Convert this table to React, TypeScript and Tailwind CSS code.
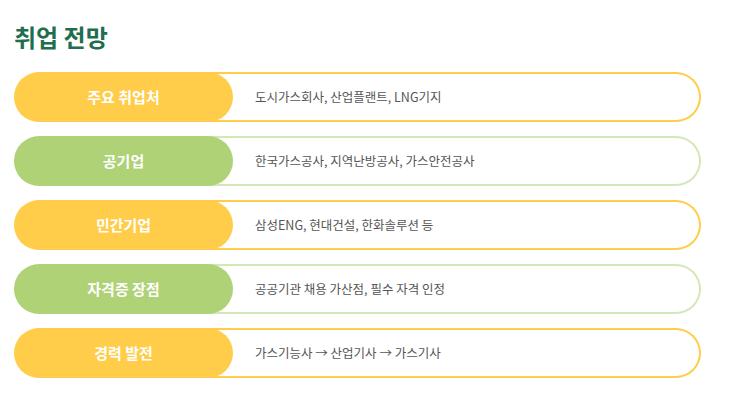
import React from "react";

const rows = [
  { label: "주요 취업처", text: "도시가스회사, 산업플랜트, LNG기지", c: "y" },
  { label: "공기업", text: "한국가스공사, 지역난방공사, 가스안전공사", c: "g" },
  { label: "민간기업", text: "삼성ENG, 현대건설, 한화솔루션 등", c: "y" },
  { label: "자격증 장점", text: "공공기관 채용 가산점, 필수 자격 인정", c: "g" },
  { label: "경력 발전", text: "가스기능사 → 산업기사 → 가스기사", c: "y" },
];

export default function App() {
  return (
    <div
      className="w-[733px] h-[401px] bg-white px-[14px] pt-[22px]"
      style={{ fontFamily: '"Noto Sans CJK KR", "Noto Sans", sans-serif' }}
    >
      <h1 className="text-[24px] leading-[30px] font-bold text-[#1f6e4f] mb-[20px]">취업 전망</h1>
      <div className="flex flex-col gap-[14px] w-[687px]">
        {rows.map((r, i) => (
          <div key={i} className="flex h-[50px]">
            <div
              className={
                r.c === "y"
                  ? "relative z-10 w-[219px] shrink-0 rounded-full bg-[#ffcd4a] flex items-center justify-center text-white font-bold text-[15px]"
                  : "relative z-10 w-[219px] shrink-0 rounded-full bg-[#aed275] flex items-center justify-center text-white font-bold text-[15px]"
              }
            >
              {r.label}
            </div>
            <div
              className={
                r.c === "y"
                  ? "flex-1 -ml-[40px] pl-[62px] flex items-center border-2 border-l-0 border-[#ffcd4a] rounded-r-full text-[12.5px] text-[#555555]"
                  : "flex-1 -ml-[40px] pl-[62px] flex items-center border-2 border-l-0 border-[#d3e8b6] rounded-r-full text-[12.5px] text-[#555555]"
              }
            >
              {r.text}
            </div>
          </div>
        ))}
      </div>
    </div>
  );
}
